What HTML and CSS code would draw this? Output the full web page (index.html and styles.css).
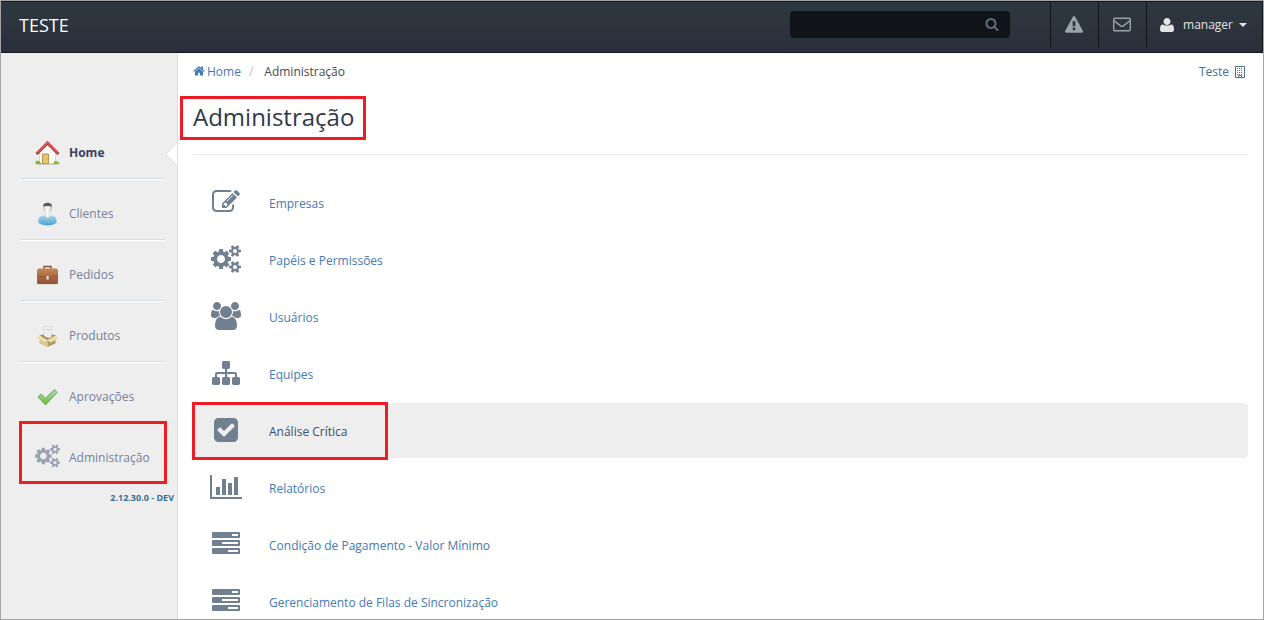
FILE: index.html
```html
<!DOCTYPE html>
<html lang="pt-BR">
<head>
<meta charset="utf-8">
<title>Administração</title>
<link rel="stylesheet" href="styles.css">
</head>
<body>
<svg class="sprite" aria-hidden="true">
  <symbol id="cogs" viewBox="0 0 1920 1792"><path d="M896 896q0-106-75-181t-181-75-181 75-75 181 75 181 181 75 181-75 75-181zm768 512q0-52-38-90t-90-38-90 38-38 90q0 53 37.5 90.5t90.5 37.5 90.5-37.5 37.5-90.5zm0-1024q0-52-38-90t-90-38-90 38-38 90q0 53 37.5 90.5t90.5 37.5 90.5-37.5 37.5-90.5zm-384 421v185q0 10-7 19.5t-16 10.5l-155 24q-11 35-32 76 34 48 90 115 7 11 7 20 0 12-7 19-23 30-82.5 89.5t-78.5 59.5q-11 0-21-7l-115-90q-37 19-77 31-11 108-23 155-7 24-30 24h-186q-11 0-20-7.5t-10-17.5l-23-153q-34-10-75-31l-118 89q-7 7-20 7-11 0-21-8-144-133-144-160 0-9 7-19 10-14 41-53t47-61q-23-44-35-82l-152-24q-10-1-17-9.5t-7-19.5v-185q0-10 7-19.5t16-10.5l155-24q11-35 32-76-34-48-90-115-7-11-7-20 0-12 7-20 22-30 82-89t79-59q11 0 21 7l115 90q34-18 77-32 11-108 23-154 7-24 30-24h186q11 0 20 7.5t10 17.5l23 153q34 10 75 31l118-89q8-7 20-7 11 0 21 8 144 133 144 160 0 8-7 19-12 16-42 54t-45 60q23 48 34 82l152 23q10 2 17 10.5t7 19.5zm640 533v140q0 16-149 31-12 27-30 52 51 113 51 138 0 4-4 7-122 71-124 71-8 0-46-47t-52-68q-20 2-30 2t-30-2q-14 21-52 68t-46 47q-2 0-124-71-4-3-4-7 0-25 51-138-18-25-30-52-149-15-149-31v-140q0-16 149-31 13-29 30-52-51-113-51-138 0-4 4-7 4-2 35-20t59-34 30-16q8 0 46 46.5t52 67.5q20-2 30-2t30 2q51-71 92-112l6-2q4 0 124 70 4 3 4 7 0 25-51 138 17 23 30 52 149 15 149 31zm0-1024v140q0 16-149 31-12 27-30 52 51 113 51 138 0 4-4 7-122 71-124 71-8 0-46-47t-52-68q-20 2-30 2t-30-2q-14 21-52 68t-46 47q-2 0-124-71-4-3-4-7 0-25 51-138-18-25-30-52-149-15-149-31v-140q0-16 149-31 13-29 30-52-51-113-51-138 0-4 4-7 4-2 35-20t59-34 30-16q8 0 46 46.5t52 67.5q20-2 30-2t30 2q51-71 92-112l6-2q4 0 124 70 4 3 4 7 0 25-51 138 17 23 30 52 149 15 149 31z"/></symbol>
  <symbol id="tasks" viewBox="0 0 1792 1792"><path d="M1024 1408h640v-128h-640v128zm-384-512h1024v-128h-1024v128zm640-512h384v-128h-384v128zm512 832v256q0 26-19 45t-45 19h-1664q-26 0-45-19t-19-45v-256q0-26 19-45t45-19h1664q26 0 45 19t19 45zm0-512v256q0 26-19 45t-45 19h-1664q-26 0-45-19t-19-45v-256q0-26 19-45t45-19h1664q26 0 45 19t19 45zm0-512v256q0 26-19 45t-45 19h-1664q-26 0-45-19t-19-45v-256q0-26 19-45t45-19h1664q26 0 45 19t19 45z"/></symbol>
</svg>
<div class="app">
  <header class="topbar">
    <a class="brand" href="#">TESTE</a>
    <form class="search">
      <input class="search-input" type="text" aria-label="Pesquisar">
      <button class="search-button" type="button" aria-label="Pesquisar"><svg viewBox="0 0 1792 1792" width="14" height="14"><path d="M1216 832q0-185-131.5-316.5t-316.5-131.5-316.5 131.5-131.5 316.5 131.5 316.5 316.5 131.5 316.5-131.5 131.5-316.5zm512 832q0 52-38 90t-90 38q-54 0-90-38l-343-342q-179 124-399 124-143 0-273.5-55.5t-225-150-150-225-55.5-273.5 55.5-273.5 150-225 225-150 273.5-55.5 273.5 55.5 225 150 150 225 55.5 273.5q0 220-124 399l343 343q37 37 37 90z"/></svg></button>
    </form>
    <nav class="tools">
      <button class="tool" type="button" aria-label="Alertas"><svg viewBox="0 0 1792 1792" width="18" height="18"><path d="M1024 1375v-190q0-14-9.500-23.500t-22.500-9.500h-192q-13 0-22.500 9.500t-9.500 23.500v190q0 14 9.500 23.500t22.500 9.500h192q13 0 22.500-9.500t9.500-23.500zm-2-374l18-459q0-12-10-19-13-11-24-11h-220q-11 0-24 11-10 7-10 21l17 457q0 10 10 16.500t24 6.500h185q14 0 23.500-6.500t10.500-16.500zm-14-934l768 1408q35 63-2 126-17 29-46.500 46t-63.500 17h-1536q-34 0-63.500-17t-46.500-46q-37-63-2-126l768-1408q17-31 47-49t65-18 65 18 47 49z"/></svg></button>
      <button class="tool" type="button" aria-label="Mensagens"><svg class="line" viewBox="0 0 18 18" width="18" height="18"><rect x=".7" y="2.200" width="16.600" height="12.600" rx="1.200"/><path d="M1 4.500C3 6.500 6 8.500 7.600 9.900q1.400 1 2.800 0C12 8.500 15 6.500 17 4.500"/></svg></button>
      <button class="tool user" type="button"><svg viewBox="128 128 1536 1536" width="16" height="14"><path d="M1664 1399q0 109-62.500 187t-150.500 78h-1110q-88 0-150.500-78t-62.500-187q0-85 8.500-160.500t31.500-152 58.500-131 94-89 134.500-34.500q231 128 441 128t441-128q76 0 134.500 34.500t94 89 58.500 131 31.500 152 8.500 160.500zm-384-887q0 159-112.500 271.500t-271.500 112.500-271.500-112.500-112.500-271.500 112.500-271.500 271.500-112.500 271.500 112.500 112.500 271.500z"/></svg><span>manager</span><i class="caret"></i></button>
    </nav>
  </header>
  <div class="body">
    <aside class="sidebar">
      <nav>
        <a class="item active" href="#"><svg viewBox="0 0 24 24"><path fill="#e8f1dc" d="M2 22h20v2H2z"/><path fill="#fbfbfb" stroke="#c3c0c0" stroke-width=".6" d="M4 11l8-8 8 8v12H4z"/><path fill="#e5c568" stroke="#a87f2e" stroke-width=".8" d="M7 13h6v9.600H7z"/><path fill="#c79f45" d="M11 17h1v1.500h-1z"/><path fill="#79bb2b" d="M0 23q0-4 2-3 2-1 4 3zM18 23q0-3 2-3 3 0 4 3z"/><path fill="none" stroke="#a82b2f" stroke-width="3" d="M1 13L12 2l11 11"/><path fill="none" stroke="#e15a5a" stroke-width="1.800" d="M1.500 12L12 1.700 22.500 12"/><path fill="#aaa" d="M1 22.600h22v.8H1z"/></svg><span>Home</span><svg class="notch" viewBox="0 0 12 24"><path fill="#fff" d="M12 .5L.7 12 12 23.500z"/><path fill="none" stroke="#d5dee0" d="M11.500 1L.7 12l10.800 11"/></svg></a>
        <a class="item" href="#"><svg viewBox="0 0 24 24"><defs><linearGradient id="shirt" x2="0" y2="1"><stop stop-color="#a8d6ef"/><stop offset="1" stop-color="#4fa0cc"/></linearGradient><linearGradient id="face"><stop stop-color="#c4c4c4"/><stop offset=".5" stop-color="#fff"/><stop offset="1" stop-color="#bdbdbd"/></linearGradient></defs><path fill="url(#shirt)" d="M3 21C2.500 16 4 14 8 13.500l4 1 4-1c4 .5 5.500 2.500 5 7.500Q17 23.500 12 23.500T3 21z"/><path fill="url(#face)" d="M7.500 4.500C7.500 2 9 1 12 1s4.500 1 4.500 3.500c0 3-.5 5-2 6.500v3.500q-2.500 1.500-5 0V11c-1.500-1.500-2-3.500-2-6.500z"/><path fill="#5a5a5a" d="M7.500 4.500C7.500 2 9 .7 12 .7s4.500 1.300 4.500 3.800Q14.500 3.500 12 4.200 9.500 3.500 7.500 4.500z"/></svg><span>Clientes</span></a>
        <a class="item" href="#"><svg viewBox="0 0 24 24"><defs><linearGradient id="leather" x2="0" y2="1"><stop stop-color="#c98655"/><stop offset="1" stop-color="#8d5230"/></linearGradient></defs><path fill="#b5b0ad" opacity=".6" d="M1 20h22v1.500H1z"/><path fill="none" stroke="#86543a" stroke-width="1.400" d="M8.500 6V3.500h7V6"/><rect x="1.500" y="5.500" width="21" height="15.500" rx="2" fill="url(#leather)"/><path fill="none" stroke="#8a5030" stroke-width=".8" d="M2 13q10 3 20.500 0"/><rect x="11" y="13" width="2.200" height="3.500" fill="#f0e7df"/></svg><span>Pedidos</span></a>
        <a class="item" href="#"><svg viewBox="0 0 24 24"><path fill="#f0f0f0" stroke="#d0d0d0" stroke-width=".7" d="M8.500 2.500h7.500v10H8.500z"/><path fill="none" stroke="#c6c6c6" stroke-width=".8" d="M10.500 5.500h3v2h-2"/><path fill="#a68f57" d="M4 11.500l8-2 9 2-9 5z"/><path fill="#eee" d="M8.500 7H16v6l-3 1-4.500-2z"/><path fill="#d9c693" d="M4 14l8 3v6l-8-3.500z"/><path fill="#b39c64" d="M12 17l8-3v5.500L12 23z"/><path fill="#ecdcae" d="M4 11.500l8 4.500-2.500 2.500L.8 14zM20 11.500L12 16l3 2.500 8.500-4.500z"/></svg><span>Produtos</span></a>
        <a class="item" href="#"><svg viewBox="0 0 24 24"><defs><linearGradient id="tick" x2="0" y2="1"><stop stop-color="#b5dcb5"/><stop offset="1" stop-color="#65be2d"/></linearGradient></defs><path fill="url(#tick)" stroke="#68a868" d="M2.500 12l3-3 4.500 4.200L19 4.500l2.500 3L10 20z"/></svg><span>Aprovações</span></a>
        <a class="item" href="#"><svg class="muted"><use href="#cogs"/></svg><span>Administração</span><i class="mark mark-nav"></i></a>
      </nav>
      <div class="version">2.12.30.0 - DEV</div>
    </aside>
    <main class="content">
      <div class="crumbs">
        <nav class="trail"><a href="#"><svg viewBox="64 192 1664 1408" width="12" height="10"><path d="M1472 992v480q0 26-19 45t-45 19h-384v-384h-256v384h-384q-26 0-45-19t-19-45v-480q0-1 .5-3t.5-3l575-474 575 474q1 2 1 6zm223-69l-62 74q-8 9-21 11h-3q-13 0-21-7l-692-577-692 577q-12 8-24 7-13-2-21-11l-62-74q-8-10-7-23.500t11-21.500l719-599q32-26 76-26t76 26l244 204v-195q0-14 9-23t23-9h192q14 0 23 9t9 23v408l219 182q10 8 11 21.500t-7 23.500z"/></svg>Home</a><span class="slash">/</span><span>Administração</span></nav>
        <a class="company" href="#">Teste<svg viewBox="0 0 10 12" width="10" height="12"><path fill="none" stroke="currentColor" d="M.5 11.500V.5h9v11zM3.500 11.500v-2h3v2"/><path stroke="currentColor" stroke-dasharray="1 1" d="M2 2.500h6M2 4.500h6M2 6.500h6M2 8.500h6"/></svg></a>
      </div>
      <h1 class="title"><span>Administração<i class="mark mark-title"></i></span></h1>
      <ul class="list">
        <li><a class="row" href="#"><svg viewBox="0 0 1792 1792"><path d="M888 1184l116-116-152-152-116 116v56h96v96h56zm440-720q-16-16-33 1l-350 350q-17 17-1 33t33-1l350-350q17-17 1-33zm80 594v190q0 119-84.500 203.500t-203.500 84.500h-832q-119 0-203.500-84.500t-84.500-203.500v-832q0-119 84.500-203.500t203.500-84.500h832q63 0 117 25 15 7 18 23 3 17-9 29l-49 49q-14 14-32 8-23-6-45-6h-832q-66 0-113 47t-47 113v832q0 66 47 113t113 47h832q66 0 113-47t47-113v-126q0-13 9-22l64-64q15-15 35-7t20 29zm-96-738l288 288-672 672h-288v-288zm444 132l-92 92-288-288 92-92q28-28 68-28t68 28l152 152q28 28 28 68t-28 68z"/></svg><span>Empresas</span></a></li>
        <li><a class="row" href="#"><svg><use href="#cogs"/></svg><span>Papéis e Permissões</span></a></li>
        <li><a class="row" href="#"><svg viewBox="0 0 1920 1792"><path d="M593 896q-162 5-265 128h-134q-82 0-138-40.500t-56-118.500q0-353 124-353 6 0 43.500 21t97.500 42.500 119 21.500q67 0 133-23-5 37-5 66 0 139 81 256zm1071 637q0 120-73 189.500t-194 69.500h-874q-121 0-194-69.500t-73-189.500q0-53 3.500-103.500t14-109 26.500-108.500 43-97.500 62-81 85.500-53.500 111.500-20q10 0 43 21.500t73 48 107 48 135 21.500 135-21.500 107-48 73-48 43-21.500q61 0 111.500 20t85.500 53.500 62 81 43 97.500 26.500 108.500 14 109 3.500 103.500zm-1024-1277q0 106-75 181t-181 75-181-75-75-181 75-181 181-75 181 75 75 181zm704 384q0 159-112.500 271.500t-271.500 112.500-271.500-112.500-112.500-271.500 112.500-271.500 271.500-112.500 271.500 112.500 112.500 271.500zm576 225q0 78-56 118.500t-138 40.500h-134q-103-123-265-128 81-117 81-256 0-29-5-66 66 23 133 23 59 0 119-21.500t97.500-42.500 43.500-21q124 0 124 353zm-128-609q0 106-75 181t-181 75-181-75-75-181 75-181 181-75 181 75 75 181z"/></svg><span>Usuários</span></a></li>
        <li><a class="row" href="#"><svg viewBox="0 0 1792 1792"><path d="M1792 1248v320q0 40-28 68t-68 28h-320q-40 0-68-28t-28-68v-320q0-40 28-68t68-28h96v-192h-512v192h96q40 0 68 28t28 68v320q0 40-28 68t-68 28h-320q-40 0-68-28t-28-68v-320q0-40 28-68t68-28h96v-192h-512v192h96q40 0 68 28t28 68v320q0 40-28 68t-68 28h-320q-40 0-68-28t-28-68v-320q0-40 28-68t68-28h96v-192q0-52 38-90t90-38h512v-192h-96q-40 0-68-28t-28-68v-320q0-40 28-68t68-28h320q40 0 68 28t28 68v320q0 40-28 68t-68 28h-96v192h512q52 0 90 38t38 90v192h96q40 0 68 28t28 68z"/></svg><span>Equipes</span></a></li>
        <li><a class="row selected" href="#"><svg viewBox="0 0 1792 1792"><path d="M813 1299l614-614q19-19 19-45t-19-45l-102-102q-19-19-45-19t-45 19l-467 467-211-211q-19-19-45-19t-45 19l-102 102q-19 19-19 45t19 45l358 358q19 19 45 19t45-19zm851-883v960q0 119-84.500 203.500t-203.500 84.500h-960q-119 0-203.500-84.500t-84.500-203.500v-960q0-119 84.500-203.500t203.500-84.500h960q119 0 203.500 84.500t84.500 203.500z"/></svg><span>Análise Crítica</span><i class="mark mark-row"></i></a></li>
        <li><a class="row" href="#"><svg viewBox="0 0 2048 1792"><path d="M640 896v512h-256v-512h256zm384-512v1024h-256v-1024h256zm1024 1152v128h-2048v-1536h128v1408h1920zm-640-896v768h-256v-768h256zm384-384v1152h-256v-1152h256z"/></svg><span>Relatórios</span></a></li>
        <li><a class="row" href="#"><svg><use href="#tasks"/></svg><span>Condição de Pagamento - Valor Mínimo</span></a></li>
        <li><a class="row" href="#"><svg><use href="#tasks"/></svg><span>Gerenciamento de Filas de Sincronização</span></a></li>
      </ul>
    </main>
  </div>
</div>
</body>
</html>
```
FILE: styles.css
```css
* { box-sizing: border-box; }
body {
  margin: 0;
  font: 12px/20px "Open Sans", sans-serif;
  color: #3f4a5a;
  background: #fff;
}
a { color: #4379b5; text-decoration: none; }
button { font: inherit; border: 0; padding: 0; background: none; cursor: pointer; }
svg { fill: currentColor; flex: none; }
.sprite { position: absolute; width: 0; height: 0; }
.app {
  display: flex;
  flex-direction: column;
  height: 100vh;
  border: 1px solid #a5a5a5;
}

.topbar {
  display: flex;
  flex: none;
  align-items: flex-start;
  height: 52px;
  border: solid #11161b;
  border-width: 1px 1px 1px 0;
  background: linear-gradient(#2e3840, #2a2f3b);
}
.brand {
  flex: 1;
  padding: 11px 18px;
  font-size: 18px;
  line-height: 24px;
  color: #fff;
}
.search {
  display: flex;
  width: 220px;
  height: 27px;
  margin: 9px 40px 0 0;
  border-radius: 4px;
  background: #101418;
}
.search-input {
  flex: 1;
  min-width: 0;
  padding: 0 8px;
  border: 0;
  outline: 0;
  background: none;
  color: #cfd6de;
  font: inherit;
}
.search-button { display: flex; align-items: center; padding: 0 11px 1px; color: #5d6b80; }
.tools { display: flex; height: 46px; }
.tool {
  display: flex;
  align-items: center;
  justify-content: center;
  width: 48px;
  padding-right: 1px;
  border-left: 1px solid #11161b;
  color: #9aa3a9;
}
.line { fill: none; stroke: currentColor; stroke-width: 1.4px; }
.user { width: 116px; gap: 8px; padding-right: 3px; color: #e4e4e4; }
.caret { margin-left: -2px; border: solid transparent; border-width: 4px 4px 0; border-top-color: #e4e4e4; }

.body { display: flex; flex: 1; min-height: 0; }
.sidebar {
  flex: none;
  width: 177px;
  padding-top: 65px;
  border-right: 1px solid #d9e0e4;
  background: #eee;
}
.item {
  position: relative;
  display: flex;
  align-items: center;
  gap: 9px;
  height: 61px;
  margin: 0 12px 0 19px;
  padding: 10px 0 0 15px;
  border-bottom: 1px solid #d3dce8;
  box-shadow: 0 1px #fff;
  color: #76819d;
}
.item svg { width: 25px; height: 24px; }
.item:last-child { border-color: transparent; box-shadow: none; }
.item.active { color: #36435a; font-weight: 700; }
.item .muted { margin-bottom: 4px; color: #99a3b5; }
.item .notch { position: absolute; right: -12px; top: 24px; width: 12px; height: 24px; }
.version {
  padding: 4px 3px 0 0;
  font-size: 9px;
  font-weight: 700;
  text-align: right;
  color: #35708f;
}

.content { flex: 1; min-width: 0; padding: 9px 15px 0; overflow-y: auto; scrollbar-width: none; }
.crumbs, .trail { display: flex; justify-content: space-between; }
.trail svg { margin-right: 2px; }
.slash { margin: 0 11px 0 8px; color: #bbb; }
.company { display: flex; align-items: center; gap: 6px; margin-right: 3px; color: #46708f; }
.title {
  margin: 0 0 20px;
  padding: 18px 0 20px;
  border-bottom: 1px solid #eaeaea;
  font-size: 24px;
  font-weight: 400;
  line-height: 34px;
  color: #2f3a48;
}
.title span { position: relative; }
.list { display: flex; flex-direction: column; gap: 2px; margin: 0; padding: 0; list-style: none; }
.row {
  position: relative;
  display: grid;
  grid-template-columns: 66px 1fr;
  gap: 10px;
  align-items: start;
  padding: 13px 0 14px;
  border-radius: 4px;
}
.row svg { width: 66px; height: 28px; color: #708090; }
.row span { padding-top: 6px; }
.row.selected { background: #eee; color: #35506f; }

/* Red callout frames drawn over the interface */
.mark { position: absolute; border: 3px solid #ee1c24; }
.mark-title { inset: -4px -12px -7px -13px; }
.mark-nav { inset: -2px -2px -1px -1px; }
.mark-row { inset: -1px auto -2px -1px; width: 196px; }
```
